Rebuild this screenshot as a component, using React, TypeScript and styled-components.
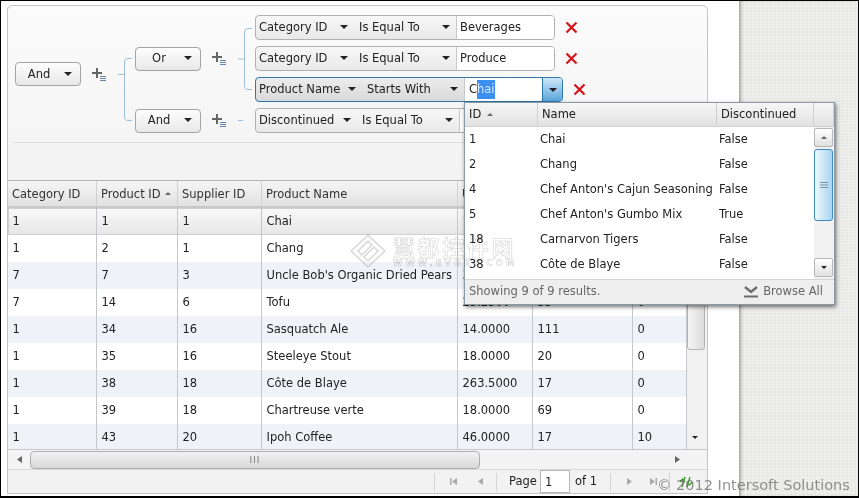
import React from 'react';
import styled, { createGlobalStyle } from 'styled-components';

const GlobalStyle = createGlobalStyle`
  html, body { margin: 0; padding: 0; background: #fff; }
  * { box-sizing: border-box; }
`;

const Page = styled.div`
  position: relative;
  width: 859px;
  height: 498px;
  display: flex;
  overflow: hidden;
  border: 1px solid #000;
  border-bottom-width: 2px;
  background: #fff;
  font-family: 'DejaVu Sans', sans-serif;
  font-size: 11.5px;
  color: #222;
`;

const Stage = styled.div`
  width: 738px;
  flex: none;
  padding: 4px 0 2px 6px;
`;

const Linen = styled.div`
  flex: 1;
  background-color: #ebebe9;
  background-image:
    repeating-linear-gradient(0deg, rgba(255,255,255,.25) 0 1px, transparent 1px 3px),
    repeating-linear-gradient(90deg, rgba(150,150,150,.07) 0 1px, transparent 1px 4px);
  box-shadow: inset 3px 0 3px -1px rgba(80,80,80,.45);
`;

const Card = styled.div`
  width: 701px;
  height: 100%;
  display: flex;
  flex-direction: column;
  border: 1px solid #c4c4c4;
  border-radius: 5px 5px 0 0;
  background: linear-gradient(#fbfbfb, #f3f3f3 175px);
`;

const FilterPanel = styled.div`
  height: 175px;
  flex: none;
  padding: 9px 7px 0;
  border-bottom: 1px solid #b4b4b4;
`;

const Tree = styled.div`
  display: flex;
  align-items: center;
  height: 118px;
`;

const Children = styled.div`
  display: flex;
  flex-direction: column;
  gap: 6px;
`;

const Group = styled.div`
  display: flex;
  align-items: center;
`;

const Rule = styled.div`
  height: 1px;
  margin: 9px 0 0 -2px;
  width: 692px;
  background: #dcdcdc;
`;

const Combo = styled.div`
  width: 66px;
  height: 24px;
  flex: none;
  display: flex;
  align-items: center;
  justify-content: space-between;
  padding: 0 8px 1px 0;
  border: 1px solid #a4a4a4;
  border-radius: 4px;
  background: linear-gradient(#fdfdfd, #e8e8e8);
  span { width: 46px; text-align: center; }
`;

const Arrow = styled.i<{ $dir?: 'up' | 'down'; $size?: number }>`
  display: inline-block;
  flex: none;
  width: 0;
  height: 0;
  border-left: ${p => p.$size ?? 4}px solid transparent;
  border-right: ${p => p.$size ?? 4}px solid transparent;
  ${p => (p.$dir === 'up'
    ? `border-bottom: ${p.$size ?? 4}px solid #666;`
    : `border-top: ${p.$size ?? 4}px solid #222;`)}
`;

const PlusSlot = styled.svg`
  flex: none;
  margin: 0 12px 0 11px;
`;

const FilterRow = styled.div`
  display: flex;
  align-items: center;
  height: 25px;
`;

const Fields = styled.div<{ $active?: boolean }>`
  display: flex;
  height: 25px;
  border: 1px solid ${p => (p.$active ? '#2f76aa' : '#b0b0b0')};
  border-radius: 4px;
  background: ${p => (p.$active ? 'linear-gradient(#ececec, #d9d9d9)' : 'linear-gradient(#f7f7f7, #e9e9e9)')};
`;

const FieldDrop = styled.div<{ $w: number; $lead?: number }>`
  width: ${p => p.$w}px;
  flex: none;
  display: flex;
  align-items: center;
  justify-content: space-between;
  padding: 0 6px 1px ${p => p.$lead ?? 3}px;
  white-space: nowrap;
`;

const Value = styled.div<{ $w: number; $active?: boolean }>`
  width: ${p => p.$w}px;
  flex: none;
  display: flex;
  align-items: center;
  padding: 0 0 1px ${p => (p.$active ? 4 : 3)}px;
  background: #fff;
  border-left: 1px solid #c8c8c8;
  border-radius: 0 3px 3px 0;
  mark {
    display: inline-block;
    line-height: 19px;
    background: #3b8ff0;
    color: #d6e8fc;
  }
`;

const DropBtn = styled.div`
  width: 20px;
  flex: none;
  display: flex;
  align-items: center;
  justify-content: center;
  border-left: 1px solid #2f76aa;
  border-radius: 0 3px 3px 0;
  background: linear-gradient(#cfe6f7, #5aa6dc);
`;

const Remove = styled.svg`
  flex: none;
  margin-left: 10px;
`;

const Grid = styled.div`
  flex: 1;
  min-height: 0;
  display: flex;
  flex-direction: column;
`;

const GridBody = styled.div`
  height: 268px;
  flex: none;
  display: flex;
`;

const Table = styled.div`
  width: 679px;
  flex: none;
  overflow: hidden;
  background: #fff;
`;

const columns = '89px 81px 84px 196px 75px 100px 54px';

const HeadRow = styled.div`
  display: grid;
  grid-template-columns: ${columns};
  height: 27px;
  border-bottom: 2px solid #c8c8c8;
  background: linear-gradient(#f5f5f5, #e1e1e1);
`;

const HeadCell = styled.div`
  display: flex;
  align-items: center;
  gap: 4px;
  padding-left: 4px;
  border-right: 1px solid #d0d0d0;
  white-space: nowrap;
  overflow: hidden;
  color: #333;
`;

const DataRow = styled.div<{ $alt?: boolean; $current?: boolean }>`
  display: grid;
  grid-template-columns: ${columns};
  height: 27px;
  background: ${p => (p.$current ? 'linear-gradient(#f9f9f9, #e6e6e6)' : p.$alt ? '#eff3f8' : '#fff')};
  ${p => p.$current && 'box-shadow: inset 0 0 0 1px #d0d0d0;'}
`;

const Cell = styled.div`
  display: flex;
  align-items: center;
  padding: 0 0 1px 4.5px;
  border-right: 1px solid #c4c8cc;
  white-space: nowrap;
  overflow: hidden;
`;

const VBar = styled.div`
  flex: 1;
  display: flex;
  flex-direction: column;
  align-items: flex-start;
  justify-content: space-between;
  padding-bottom: 10px;
  background: #f1f1f1;
  i { margin-left: 5px; }
`;

const VThumb = styled.div`
  width: 18px;
  height: 143px;
  margin-top: 26px;
  border: 1px solid #b4b4b4;
  border-radius: 0 0 3px 3px;
  background: linear-gradient(90deg, #f4f4f4, #dcdcdc);
`;

const HBar = styled.div`
  height: 20px;
  flex: none;
  display: flex;
  align-items: center;
  padding: 0 26px 0 8px;
  border-top: 1px solid #c6c6c6;
  background: #f4f4f4;
`;

const HThumb = styled.div`
  width: 450px;
  height: 18px;
  margin: 0 auto 0 6px;
  display: flex;
  align-items: center;
  justify-content: center;
  border: 1px solid #aeaeae;
  border-radius: 4px;
  background: linear-gradient(#f2f2f2, #d9d9d9);
  color: #777;
  font-size: 9px;
  letter-spacing: 1px;
`;

const Pager = styled.div`
  flex: 1;
  display: flex;
  align-items: center;
  justify-content: flex-end;
  padding-right: 14px;
  border-top: 1px solid #d8d8d8;
  background: #f2f2f2;
`;

const PagerSep = styled.span<{ $l?: number; $r?: number }>`
  width: 1px;
  height: 18px;
  background: #d4d4d4;
  margin: 0 ${p => p.$r ?? 0}px 0 ${p => p.$l ?? 0}px;
`;

const PageBtn = styled.svg<{ $l?: number }>`
  flex: none;
  margin-left: ${p => p.$l ?? 0}px;
`;

const PageLabel = styled.span<{ $l: number }>`
  margin-left: ${p => p.$l}px;
  padding-bottom: 1px;
`;

const PageInput = styled.div`
  width: 30px;
  height: 23px;
  margin-left: 3px;
  padding-left: 4px;
  display: flex;
  align-items: center;
  background: #fff;
  border: 1px solid #b8b8b8;
`;

const Popup = styled.div`
  position: absolute;
  left: 463px;
  top: 101px;
  width: 371px;
  height: 203px;
  display: flex;
  flex-direction: column;
  background: #fff;
  border: 1px solid #8c9aa6;
  box-shadow: 1px 2px 4px rgba(0,0,0,.55);
`;

const popColumns = '73px 179px 97px 1fr';

const PopHead = styled.div`
  height: 24px;
  flex: none;
  display: grid;
  grid-template-columns: ${popColumns};
  border-bottom: 1px solid #d2d2d2;
  background: linear-gradient(#f6f6f6, #e2e2e2);
`;

const PopHeadCell = styled.div`
  display: flex;
  align-items: center;
  gap: 6px;
  padding: 0 0 1px 4px;
  border-right: 1px solid #d0d0d0;
`;

const PopMain = styled.div`
  flex: 1;
  display: flex;
  min-height: 0;
`;

const PopRows = styled.div`
  width: 349px;
`;

const PopRow = styled.div`
  height: 25px;
  display: grid;
  grid-template-columns: 71px 179px 1fr;
  align-items: center;
  padding: 0 0 1px 4px;
  white-space: nowrap;
`;

const PopScroll = styled.div`
  flex: 1;
  display: flex;
  flex-direction: column;
  padding: 1px 1px 2px 0;
  background: #f1f1f1;
`;

const ScrollBtn = styled.div`
  height: 19px;
  flex: none;
  display: flex;
  align-items: center;
  justify-content: center;
  border: 1px solid #b8b8b8;
  border-radius: 2px;
  background: linear-gradient(#fff, #e0e0e0);
`;

const PopThumb = styled.div`
  height: 72px;
  margin: 2px 0 auto;
  display: flex;
  align-items: center;
  justify-content: center;
  border: 1px solid #3c87c4;
  border-radius: 3px;
  background: linear-gradient(90deg, #f0f8fd, #a7d5f1);
`;

const PopFoot = styled.div`
  height: 25px;
  flex: none;
  display: flex;
  align-items: center;
  justify-content: space-between;
  padding: 0 11px 2px 4px;
  border-top: 1px solid #d4d4d4;
  background: #eeeeee;
  color: #666;
`;

const Browse = styled.span`
  display: flex;
  align-items: center;
  gap: 5px;
`;

const Copyright = styled.div`
  position: absolute;
  left: 656px;
  top: 476px;
  font-size: 14.5px;
  color: rgba(110,110,110,.75);
  white-space: nowrap;
`;

const Stamp = styled.div`
  position: absolute;
  left: 349px;
  top: 233px;
  display: flex;
  align-items: flex-start;
  gap: 7px;
  pointer-events: none;
  mix-blend-mode: multiply;
`;

const StampText = styled.div`
  display: flex;
  flex-direction: column;
  color: #fff;
  -webkit-text-stroke: .5px #cfcfcf;
  b {
    font: 700 22px/25px 'Noto Sans CJK SC', sans-serif;
    letter-spacing: 2.6px;
  }
  small {
    font: 700 8.5px/9px 'DejaVu Sans', sans-serif;
    letter-spacing: 3px;
    white-space: nowrap;
  }
`;

const PlusIcon = () => (
  <PlusSlot width="14" height="13" viewBox="0 0 14 13">
    <path d="M5 0v10M0 5h10" stroke="#646464" strokeWidth="2" fill="none" />
    <path d="M8 8.5h6M8 10.5h6M8 12.5h6" stroke="#6685a8" strokeWidth="1" fill="none" />
  </PlusSlot>
);

const Bracket = ({ h, tops }: { h: number; tops: number[] }) => (
  <svg width="17" height={h} viewBox={`0 0 17 ${h}`} style={{ flex: 'none' }}>
    <path
      d={`M0 ${h / 2 + 0.5}H6M6.5 ${tops[0] + 3}V${tops[tops.length - 1] - 3}M14 ${tops[0] + 0.5}H10Q6.5 ${tops[0] + 0.5} 6.5 ${tops[0] + 4}M14 ${tops[tops.length - 1] + 0.5}H10Q6.5 ${tops[tops.length - 1] + 0.5} 6.5 ${tops[tops.length - 1] - 4}`}
      stroke="#9dc0d8"
      fill="none"
    />
  </svg>
);

const Dash = () => (
  <svg width="17" height="3" viewBox="0 0 17 3" style={{ flex: 'none' }}>
    <path d="M0 1.5H5" stroke="#9dc0d8" fill="none" />
  </svg>
);

const Cross = () => (
  <Remove width="13" height="13" viewBox="0 0 13 13">
    <path d="M1.5 1.5l10 10M11.5 1.5l-10 10" stroke="#d8141a" strokeWidth="2.2" fill="none" />
  </Remove>
);

const PagerIcon = ({ d, l, fill = '#a9a9a9' }: { d: string; l?: number; fill?: string }) => (
  <PageBtn $l={l} width="8" height="9" viewBox="0 0 8 9">
    <path d={d} fill={fill} />
  </PageBtn>
);

const headers = ['Category ID', 'Product ID', 'Supplier ID', 'Product Name', 'Unit Price', 'Units In Stock', 'Reorder'];

const rows: string[][] = [
  ['1', '1', '1', 'Chai', '18.0000', '39', '10'],
  ['1', '2', '1', 'Chang', '19.0000', '17', '25'],
  ['7', '7', '3', "Uncle Bob's Organic Dried Pears", '30.0000', '15', '10'],
  ['7', '14', '6', 'Tofu', '23.2500', '35', '0'],
  ['1', '34', '16', 'Sasquatch Ale', '14.0000', '111', '0'],
  ['1', '35', '16', 'Steeleye Stout', '18.0000', '20', '0'],
  ['1', '38', '18', 'Côte de Blaye', '263.5000', '17', '0'],
  ['1', '39', '18', 'Chartreuse verte', '18.0000', '69', '0'],
  ['1', '43', '20', 'Ipoh Coffee', '46.0000', '17', '10'],
];

const results = [
  ['1', 'Chai', 'False'],
  ['2', 'Chang', 'False'],
  ['4', "Chef Anton's Cajun Seasoning", 'False'],
  ['5', "Chef Anton's Gumbo Mix", 'True'],
  ['18', 'Carnarvon Tigers', 'False'],
  ['38', 'Côte de Blaye', 'False'],
];

const App = () => {
  return (
    <Page>
      <GlobalStyle />
      <Stage>
        <Card>
          <FilterPanel>
            <Tree>
              <Combo><span>And</span><Arrow /></Combo>
              <PlusIcon />
              <Bracket h={118} tops={[43, 105]} />
              <Children>
                <Group>
                  <Combo><span>Or</span><Arrow /></Combo>
                  <PlusIcon />
                  <Bracket h={87} tops={[13, 74]} />
                  <Children>
                    <FilterRow>
                      <Fields>
                        <FieldDrop $w={98}>Category ID<Arrow /></FieldDrop>
                        <FieldDrop $w={102} $lead={5}>Is Equal To<Arrow /></FieldDrop>
                        <Value $w={98}>Beverages</Value>
                      </Fields>
                      <Cross />
                    </FilterRow>
                    <FilterRow>
                      <Fields>
                        <FieldDrop $w={98}>Category ID<Arrow /></FieldDrop>
                        <FieldDrop $w={102} $lead={5}>Is Equal To<Arrow /></FieldDrop>
                        <Value $w={98}>Produce</Value>
                      </Fields>
                      <Cross />
                    </FilterRow>
                    <FilterRow>
                      <Fields $active>
                        <FieldDrop $w={106}>Product Name<Arrow /></FieldDrop>
                        <FieldDrop $w={102} $lead={5}>Starts With<Arrow /></FieldDrop>
                        <Value $w={78} $active>C<mark>hai</mark></Value>
                        <DropBtn><Arrow /></DropBtn>
                      </Fields>
                      <Cross />
                    </FilterRow>
                  </Children>
                </Group>
                <Group>
                  <Combo><span>And</span><Arrow /></Combo>
                  <PlusIcon />
                  <Dash />
                  <FilterRow>
                    <Fields>
                      <FieldDrop $w={101}>Discontinued<Arrow /></FieldDrop>
                      <FieldDrop $w={102} $lead={5}>Is Equal To<Arrow /></FieldDrop>
                      <Value $w={98}>False</Value>
                    </Fields>
                    <Cross />
                  </FilterRow>
                </Group>
              </Children>
            </Tree>
            <Rule />
          </FilterPanel>
          <Grid>
            <GridBody>
              <Table>
                <HeadRow>
                  {headers.map((h, i) => (
                    <HeadCell key={h}>
                      {h}
                      {i === 1 && <Arrow $dir="up" $size={3} />}
                    </HeadCell>
                  ))}
                </HeadRow>
                {rows.map((r, i) => (
                  <DataRow key={r[1]} $current={i === 0} $alt={i % 2 === 0}>
                    {r.map((c, j) => <Cell key={j}>{c}</Cell>)}
                  </DataRow>
                ))}
              </Table>
              <VBar>
                <VThumb />
                <Arrow $size={3} />
              </VBar>
            </GridBody>
            <HBar>
              <PagerIcon fill="#666" d="M6 1v7L1 4.5z" />
              <HThumb>III</HThumb>
              <PagerIcon fill="#666" d="M2 1v7l5-3.5z" />
            </HBar>
            <Pager>
              <PagerSep $r={15} />
              <PagerIcon d="M0 1h1.5v7H0zM7 1v7L2 4.5z" />
              <PagerIcon l={19} d="M6 1v7L1 4.5z" />
              <PagerSep $l={11} />
              <PageLabel $l={12}>Page</PageLabel>
              <PageInput>1</PageInput>
              <PageLabel $l={5}>of 1</PageLabel>
              <PagerSep $l={13} />
              <PagerIcon l={14} d="M2 1v7l5-3.5z" />
              <PagerIcon l={16} d="M1 1v7l5-3.5zM6.5 1H8v7H6.5z" />
              <PagerSep $l={12} $r={9} />
              <svg width="14" height="14" viewBox="0 0 14 14">
                <path d="M3 12L6 2M1 7l2.5-3L6 7M11 2L8 12M13 7l-2.5 3L8 7" stroke="#3f9a2f" strokeWidth="1.4" fill="none" />
              </svg>
            </Pager>
          </Grid>
        </Card>
      </Stage>
      <Linen />

      <Popup>
        <PopHead>
          <PopHeadCell>ID<Arrow $dir="up" $size={3} /></PopHeadCell>
          <PopHeadCell>Name</PopHeadCell>
          <PopHeadCell>Discontinued</PopHeadCell>
          <PopHeadCell />
        </PopHead>
        <PopMain>
          <PopRows>
            {results.map(r => (
              <PopRow key={r[0]}>
                <span>{r[0]}</span>
                <span>{r[1]}</span>
                <span>{r[2]}</span>
              </PopRow>
            ))}
          </PopRows>
          <PopScroll>
            <ScrollBtn><Arrow $dir="up" $size={3} /></ScrollBtn>
            <PopThumb>
              <svg width="8" height="8" viewBox="0 0 8 8">
                <path d="M0 1.5h8M0 4h8M0 6.5h8" stroke="#7b93a5" fill="none" />
              </svg>
            </PopThumb>
            <ScrollBtn><Arrow $size={3} /></ScrollBtn>
          </PopScroll>
        </PopMain>
        <PopFoot>
          <span>Showing 9 of 9 results.</span>
          <Browse>
            <svg width="14" height="13" viewBox="0 0 14 13">
              <path d="M1 2l6 5 6-5" stroke="#6d6d6d" strokeWidth="2.4" fill="none" />
              <path d="M0 11.5h14" stroke="#6d6d6d" strokeWidth="2" fill="none" />
            </svg>
            Browse All
          </Browse>
        </PopFoot>
      </Popup>

      <Stamp>
        <svg width="36" height="34" viewBox="0 0 36 34">
          <g fill="none" stroke="#d2d2d2" strokeWidth="1.2">
            <path d="M18 1l17 16-17 16L1 17z" fill="#fbfbfb" />
            <path d="M8 17L18 7l4 4-10 10zM14 23l10-10 4 4-10 10z" fill="#fff" />
          </g>
        </svg>
        <StampText>
          <b>慧都控件网</b>
          <small>WWW.EVGET.COM</small>
        </StampText>
      </Stamp>
      <Copyright>© 2012 Intersoft Solutions</Copyright>
    </Page>
  );
};

export default App;
